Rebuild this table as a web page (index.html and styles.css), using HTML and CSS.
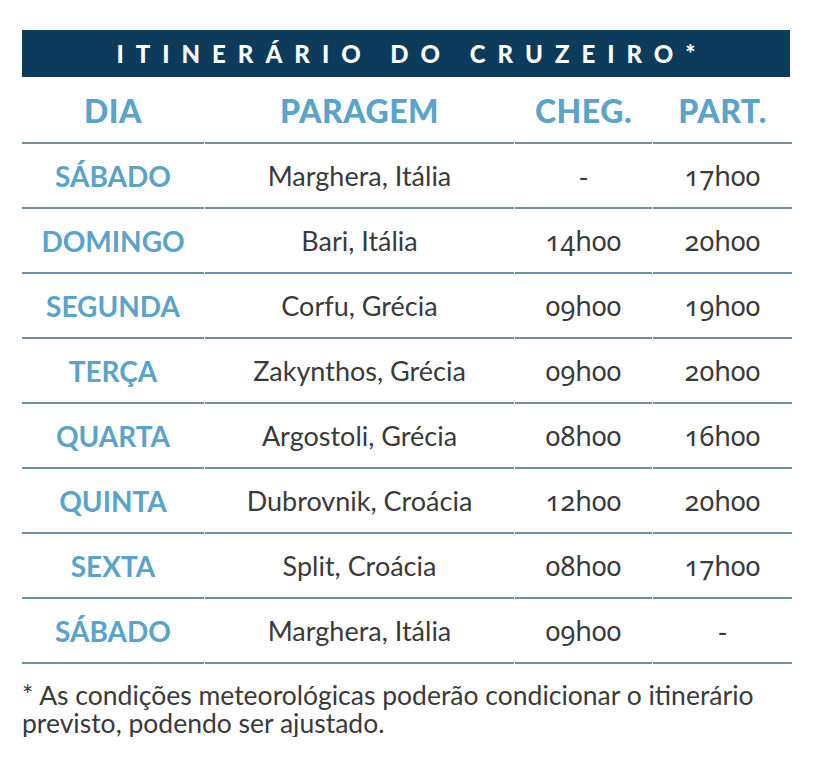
FILE: index.html
```html
<!DOCTYPE html>
<html lang="pt">
<head>
<meta charset="utf-8">
<title>Itinerário do Cruzeiro</title>
<link rel="stylesheet" href="styles.css">
</head>
<body>
<main class="page">
  <h1 class="title">ITINERÁRIO DO CRUZEIRO*</h1>
  <div class="table">
    <div class="th">DIA</div><div class="th">PARAGEM</div><div class="th">CHEG.</div><div class="th">PART.</div>

    <div class="day">SÁBADO</div><div class="port">Marghera, Itália</div><div class="time">-</div><div class="time">17h00</div>
    <div class="day">DOMINGO</div><div class="port">Bari, Itália</div><div class="time">14h00</div><div class="time">20h00</div>
    <div class="day">SEGUNDA</div><div class="port">Corfu, Grécia</div><div class="time">09h00</div><div class="time">19h00</div>
    <div class="day">TERÇA</div><div class="port">Zakynthos, Grécia</div><div class="time">09h00</div><div class="time">20h00</div>
    <div class="day">QUARTA</div><div class="port">Argostoli, Grécia</div><div class="time">08h00</div><div class="time">16h00</div>
    <div class="day">QUINTA</div><div class="port">Dubrovnik, Croácia</div><div class="time">12h00</div><div class="time">20h00</div>
    <div class="day">SEXTA</div><div class="port">Split, Croácia</div><div class="time">08h00</div><div class="time">17h00</div>
    <div class="day">SÁBADO</div><div class="port">Marghera, Itália</div><div class="time">09h00</div><div class="time">-</div>
  </div>
  <p class="note">* As condições meteorológicas poderão condicionar o itinerário previsto, podendo ser ajustado.</p>
</main>
</body>
</html>
```

FILE: styles.css
```css
html, body {
  margin: 0;
  padding: 0;
  background: #ffffff;
}

body {
  font-family: Lato, "Open Sans", "Noto Sans", sans-serif;
  color: #3a3a3a;
}

.page {
  width: 768px;
  padding: 30px 0 0 22px;
}

.title {
  margin: 0;
  height: 47px;
  background: #0c3b5b;
  color: #ffffff;
  font-size: 24px;
  font-weight: 900;
  letter-spacing: 12px;
  display: flex;
  align-items: center;
  justify-content: center;
  padding-left: 12px;
}

.table {
  display: grid;
  grid-template-columns: 182px 309px 137px 139px;
  column-gap: 1px;
}

.table > div {
  height: 63px;
  border-bottom: 2px solid #6f8fa3;
  display: flex;
  align-items: center;
  justify-content: center;
}

.th {
  color: #5aa3c9;
  font-size: 32px;
  font-weight: 900;
  letter-spacing: 0.5px;
  padding-top: 1px;
  box-sizing: border-box;
  height: 67px !important;
}

.day {
  color: #5aa3c9;
  font-size: 28px;
  font-weight: 700;
}

.port {
  font-size: 27px;
  font-weight: 400;
}

.time {
  font-size: 27px;
  font-family: "Noto Sans", Lato, sans-serif;
  font-variant-numeric: oldstyle-nums;
}

.note {
  margin: 17px 0 0;
  font-size: 26.5px;
  line-height: 28px;
  color: #3a3a3a;
}
```
